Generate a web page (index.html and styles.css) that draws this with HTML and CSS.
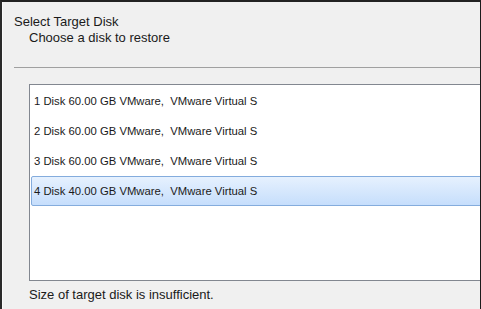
FILE: index.html
```html
<!DOCTYPE html>
<html lang="en">
<head>
    <meta charset="UTF-8">
    <title>Select Target Disk</title>
    <link rel="stylesheet" href="styles.css">
</head>
<body>

    <div class="window">
        <!-- Wizard header -->
        <div class="header">
            <div class="title">Select Target Disk</div>
            <div class="subtitle">Choose a disk to restore</div>
        </div>
        <div class="rule"></div>

        <!-- Disk list -->
        <div class="list">
            <div class="row">1 Disk 60.00 GB VMware,  VMware Virtual S</div>
            <div class="row">2 Disk 60.00 GB VMware,  VMware Virtual S</div>
            <div class="row">3 Disk 60.00 GB VMware,  VMware Virtual S</div>
            <div class="row selected">4 Disk 40.00 GB VMware,  VMware Virtual S</div>
        </div>

        <p class="status">Size of target disk is insufficient.</p>
        <div class="rule bottom"></div>
    </div>

</body>
</html>
```

FILE: styles.css
```css
body { margin: 0; font-family: "Liberation Sans", Arial, sans-serif; color: #1a1a1a; }
.window { width: 481px; height: 309px; box-sizing: border-box; background: #f0f0f0; border-top: 2px solid #222; border-left: 2px solid #2a2a2a; border-right: 1px solid #1c1c1c; box-shadow: inset 1px 0 #fafafa; overflow: hidden; }
.header { padding: 12px 0 0 12px; font-size: 13px; line-height: 16px; }
.subtitle { padding-left: 15px; }
.rule { height: 1px; background: #a0a0a0; margin: 21px 0 0 12px; }
.list { height: 194px; margin: 16px -10px 0 27px; background: #fff; border: 1px solid #828790; padding: 1px 1px 0 1px; }
.row { height: 28px; line-height: 28px; padding-left: 2px; border: 1px solid transparent; border-radius: 2px; font-size: 11.3px; white-space: pre; }
.selected { border-color: #84acdd; background: linear-gradient(#e6f1fe, #c6defc); }
.status { margin: 6px 0 0 27px; font-size: 13px; line-height: 16px; }
.rule.bottom { margin: 6px 0 0 27px; background: #8a8a8a; }
```
